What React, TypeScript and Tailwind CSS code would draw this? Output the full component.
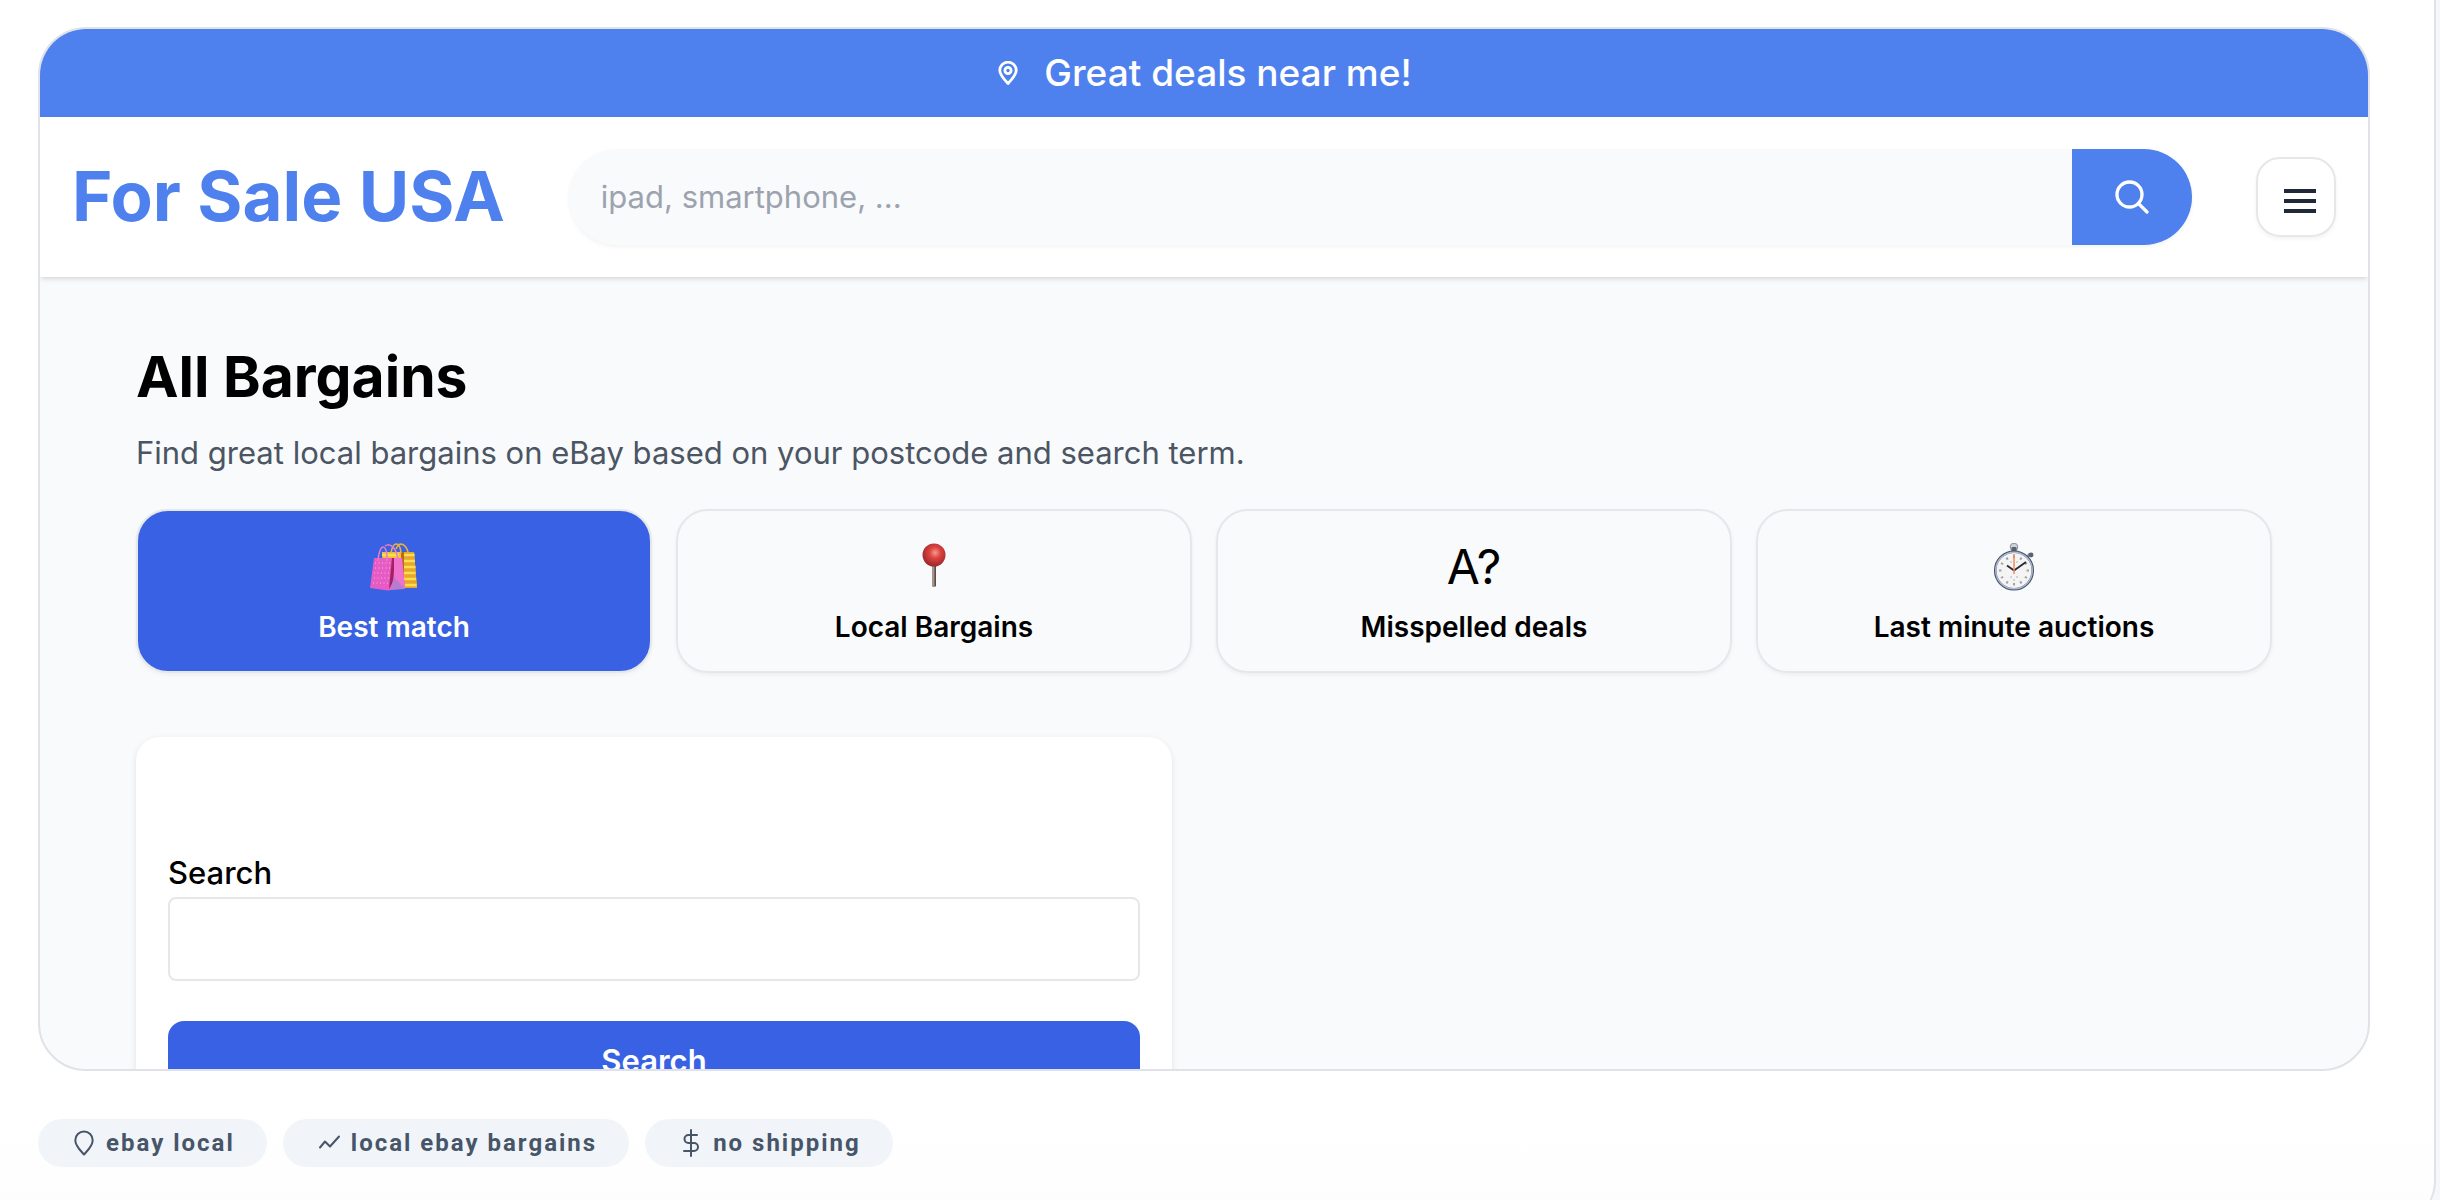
import type { ReactNode } from "react";

function PinIcon() {
  return (
    <svg className="size-6" viewBox="0 0 24 24" fill="none" stroke="currentColor" strokeWidth="2.800" strokeLinejoin="round">
      <path d="M12 22.500C8.500 18.500 3.800 14 3.800 9.400a8.200 8.200 0 0 1 16.400 0C20.200 14 15.500 18.500 12 22.500z" />
      <circle cx="12" cy="9.500" r="3.100" />
    </svg>
  );
}

function SearchIcon() {
  return (
    <svg className="size-10" viewBox="0 0 24 24" fill="none" stroke="currentColor" strokeWidth="2" strokeLinecap="round">
      <circle cx="10.500" cy="10.500" r="7.500" />
      <path d="M15.800 15.800 21 21" />
    </svg>
  );
}

function BagsIcon() {
  return (
    <svg className="size-12" viewBox="0 0 48 48">
      <path d="M12 9h32l3 36H14z" fill="#f3c137" />
      <path d="M34 9h10l3 36H32z" fill="#e9a52c" />
      <path d="M12 12h17M34 12h10.500M34 18h11M34 24h11.500M34 30h11.500M34 36h12M34 42h12.500" stroke="#f7e04e" strokeWidth="2.500" />
      <path d="M31 9h3v28l-3-8z" fill="#b86a16" />
      <path d="M21 10c2-12 9-12 10 0M26 6c4-9 10-4 12 3" fill="none" stroke="#edb13a" strokeWidth="1.500" />
      <path d="M4 15h28l3 30-17 2.500L0 45z" fill="#e75bc4" />
      <path d="M22 15h3l-2 24-4 7z" fill="#a61f5f" />
      <path d="M24 15h8l3 31-11-11z" fill="#ef72cf" />
      <path d="m24 34 11 12-15 1z" fill="#b77bd0" />
      <path
        d="M5 20h16M5 25h16M4 30h16M4 35h15M3 40h15"
        stroke="#f7b3e6"
        strokeWidth="1"
        strokeDasharray="1 2.500"
      />
      <path d="M8 18C9-1 18 0 17 18M15 3c5-4 12 2 13 15" fill="none" stroke="#e77cc5" strokeWidth="1.500" />
    </svg>
  );
}

function PushpinIcon() {
  return (
    <svg className="size-12" viewBox="0 0 48 48">
      <defs>
        <radialGradient id="pinHead" cx="0.55" cy="0.4" r="0.6">
          <stop offset="0" stopColor="#f59a8e" />
          <stop offset="0.4" stopColor="#dc453f" />
          <stop offset="1" stopColor="#9c262e" />
        </radialGradient>
      </defs>
      <rect x="22" y="22" width="4" height="22" rx="1" fill="#a59489" />
      <rect x="24.500" y="23" width="1.500" height="20" fill="#5c4b48" />
      <circle cx="24" cy="12" r="11.500" fill="url(#pinHead)" />
    </svg>
  );
}

const ticks = [0, 30, 60, 90, 120, 150, 180, 210, 240, 270, 300, 330];

function StopwatchIcon() {
  return (
    <svg className="size-12" viewBox="0 0 48 48">
      <circle cx="24" cy="4" r="3.800" fill="#cdd3dd" stroke="#8a919d" strokeWidth="1" />
      <rect x="21.500" y="4" width="5" height="5" rx="1" fill="#5b626e" />
      <path d="m36 15 4-4" stroke="#8a919d" strokeWidth="3" />
      <circle cx="41" cy="12" r="2.400" fill="#5b626e" />
      <circle cx="24" cy="27.500" r="18.800" fill="#f4f4f4" stroke="#4d5360" strokeWidth="2.500" />
      <circle cx="24" cy="27.500" r="18.300" fill="none" stroke="#a9bbd8" strokeWidth="1.400" />
      {ticks.map((deg) => (
        <path key={deg} d="M24 12.500v2.500" stroke="#a3a3a3" strokeWidth="2" transform={`rotate(${deg} 24 27.500)`} />
      ))}
      <path d="M20 19h2M26 19h2M20 34h2M26 34h2M23 37h2" stroke="#c9c9c9" strokeWidth="1.500" />
      <path d="m24 27.500-7-5M24 27.500l12-8.500" stroke="#26292f" strokeWidth="1.800" />
      <path d="M24 11v20" stroke="#f08a5d" strokeWidth="1.500" />
    </svg>
  );
}

const tabs: { label: string; icon: ReactNode; active?: boolean }[] = [
  { label: "Best match", icon: <BagsIcon />, active: true },
  { label: "Local Bargains", icon: <PushpinIcon /> },
  { label: "Misspelled deals", icon: "A?" },
  { label: "Last minute auctions", icon: <StopwatchIcon /> },
];

const tags = [
  {
    label: "ebay local",
    icon: <path d="M14 25.500C10.500 21.500 5.300 17 5.300 11.200a8.700 8.700 0 0 1 17.400 0C22.700 17 17.500 21.500 14 25.500z" />,
  },
  {
    label: "local ebay bargains",
    icon: <path d="m5 18.500 5-6 5 5 9-10" />,
  },
  {
    label: "no shipping",
    icon: <path d="M14 1v26M20 6h-8.500a4 4 0 0 0 0 8H17a4 4 0 0 1 0 8H7" />,
  },
];

export default function App() {
  return (
    <div className="h-screen overflow-hidden bg-[#f6f7f9] pr-1 font-['Inter',sans-serif] text-black">
      <main className="flex h-[calc(100vh+28px)] flex-col gap-12 rounded-br-[48px] border-r-2 border-[#dfe2e7] bg-linear-to-b from-white from-90% to-[#fdfdfd] pt-[27px] pr-16 pb-[61px] pl-[38px]">
        {/* site preview */}
        <section className="min-h-0 flex-1 overflow-hidden rounded-[48px] border-2 border-[#dfe2e7] bg-[#f9fafb]">
          <div className="flex h-[88px] items-center justify-center gap-6 bg-[#4f81ee] text-[37px] font-medium text-white">
            <PinIcon />
            <span>Great deals near me!</span>
          </div>

          <header className="flex h-40 items-center gap-16 bg-white px-8 shadow-[0_2px_6px_rgba(0,0,0,0.1),0_2px_4px_-2px_rgba(0,0,0,0.1)]">
            <a href="#" className="text-[69px] font-bold whitespace-nowrap text-[#4f81ee]">
              For Sale USA
            </a>
            <form className="flex h-24 flex-1 overflow-hidden rounded-full bg-[#f9fafb] shadow-[0_2px_4px_rgba(0,0,0,0.05)]">
              <input
                type="text"
                aria-label="Search items"
                placeholder="ipad, smartphone, ..."
                className="min-w-0 flex-1 px-8 text-[31px] placeholder:text-[#9ca3af]"
              />
              <button type="button" aria-label="Search" className="flex w-30 items-center justify-center bg-[#4f81ee] text-white">
                <SearchIcon />
              </button>
            </form>
            <button
              type="button"
              aria-label="Menu"
              className="flex size-20 flex-col items-center justify-center gap-1.5 rounded-3xl border-2 border-[#e5e7eb] pt-2 pl-2 shadow-[0_2px_4px_rgba(0,0,0,0.05)]"
            >
              <span className="h-1 w-8 bg-[#1f2937]" />
              <span className="h-1 w-8 bg-[#1f2937]" />
              <span className="h-1 w-8 bg-[#1f2937]" />
            </button>
          </header>

          <div className="px-24 pt-16">
            <h1 className="text-[57px]/[72px] font-bold">All Bargains</h1>
            <p className="mt-4 text-[31px]/[48px] text-[#4b5563]">
              Find great local bargains on eBay based on your postcode and search term.
            </p>

            <div className="mt-8 grid grid-cols-4 gap-6">
              {tabs.map((tab) => (
                <button
                  key={tab.label}
                  type="button"
                  className={`flex flex-col items-center gap-2 rounded-[32px] border-2 border-[#e5e7eb] py-6 shadow-[0_2px_4px_rgba(0,0,0,0.05)] ${
                    tab.active ? "bg-[#3862e3] text-white" : ""
                  }`}
                >
                  <span className="flex h-16 items-center text-5xl">{tab.icon}</span>
                  <span className="text-[28px]/[40px] font-semibold">{tab.label}</span>
                </button>
              ))}
            </div>

            <div className="mt-16 grid grid-cols-2 gap-16">
              <form className="rounded-3xl bg-white px-8 pt-28 pb-8 shadow-[0_2px_6px_rgba(0,0,0,0.1)]">
                <label htmlFor="term" className="block text-[31px]/[48px] font-medium">
                  Search
                </label>
                <input id="term" type="text" className="block h-[84px] w-full rounded-lg border-2 border-[#e5e7eb] px-4 text-[31px]" />
                <button type="button" className="mt-10 w-full rounded-2xl bg-[#3862e3] py-4 text-[31px]/[48px] font-semibold text-white">
                  Search
                </button>
              </form>
            </div>
          </div>
        </section>

        <ul className="flex gap-4">
          {tags.map((tag) => (
            <li
              key={tag.label}
              className="flex h-12 items-center gap-2 rounded-full bg-[#f1f5f9] px-8 font-['Roboto',sans-serif] text-2xl font-bold tracking-[2px] text-[#475569]"
            >
              <svg className="size-7" viewBox="0 0 28 28" fill="none" stroke="currentColor" strokeWidth="2" strokeLinecap="round" strokeLinejoin="round">
                {tag.icon}
              </svg>
              {tag.label}
            </li>
          ))}
        </ul>
      </main>
    </div>
  );
}
